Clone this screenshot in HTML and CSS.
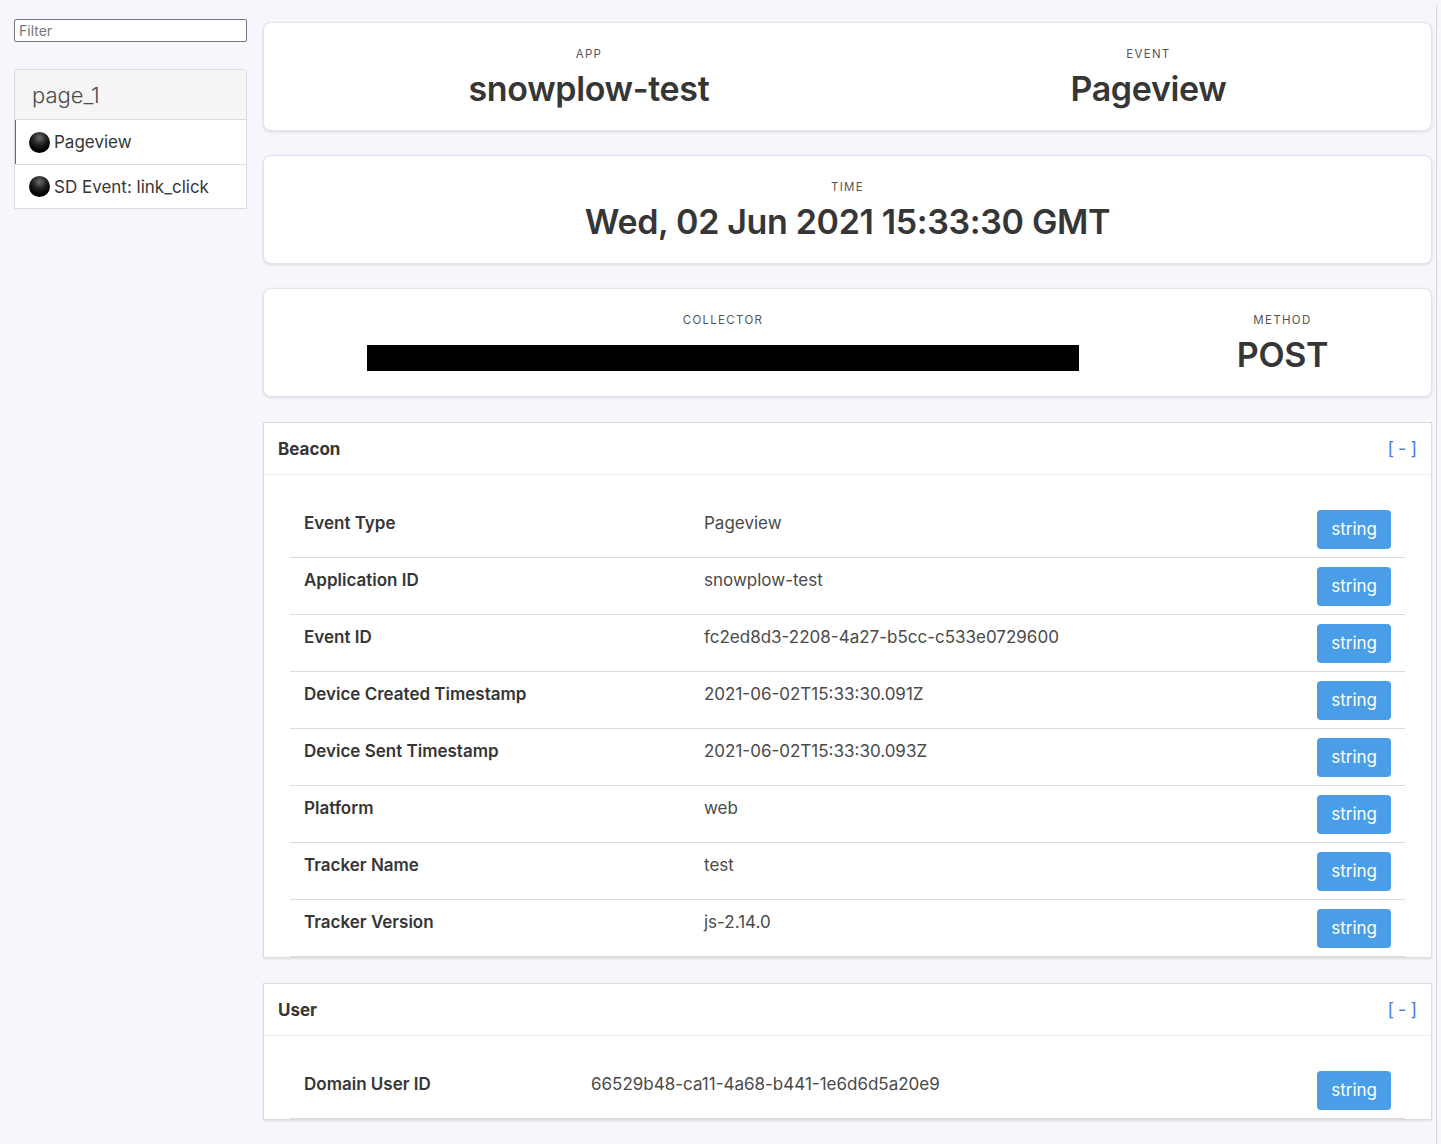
FILE: index.html
```html
<!DOCTYPE html>
<html lang="en">
<head>
<meta charset="utf-8">
<title>Snowplow Inspector</title>
<link rel="stylesheet" href="styles.css">
</head>
<body>
<div class="layout">
  <aside class="sidebar">
    <input class="filter" type="text" placeholder="Filter">
    <div class="pages">
      <div class="page-head">page_1</div>
      <a class="event is-active"><span class="dot"></span>Pageview</a>
      <a class="event"><span class="dot"></span>SD Event: link_click</a>
    </div>
  </aside>
  <main class="main">
    <section class="box level">
      <div class="level-item">
        <p class="heading">App</p>
        <p class="title">snowplow-test</p>
      </div>
      <div class="level-item">
        <p class="heading">Event</p>
        <p class="title">Pageview</p>
      </div>
    </section>
    <section class="box level">
      <div class="level-item">
        <p class="heading">Time</p>
        <p class="title">Wed, 02 Jun 2021 15:33:30 GMT</p>
      </div>
    </section>
    <section class="box level">
      <div class="level-item">
        <p class="heading">Collector</p>
        <p class="title"><span class="redacted"></span></p>
      </div>
      <div class="level-item">
        <p class="heading">Method</p>
        <p class="title">POST</p>
      </div>
    </section>

    <section class="panel">
      <header class="panel-head">
        <span class="panel-title">Beacon</span>
        <a class="toggle">[ - ]</a>
      </header>
      <div class="panel-body">
        <table class="fields beacon">
          <tr><th>Event Type</th><td>Pageview</td><td class="type"><span class="tag">string</span></td></tr>
          <tr><th>Application ID</th><td>snowplow-test</td><td class="type"><span class="tag">string</span></td></tr>
          <tr><th>Event ID</th><td>fc2ed8d3-2208-4a27-b5cc-c533e0729600</td><td class="type"><span class="tag">string</span></td></tr>
          <tr><th>Device Created Timestamp</th><td>2021-06-02T15:33:30.091Z</td><td class="type"><span class="tag">string</span></td></tr>
          <tr><th>Device Sent Timestamp</th><td>2021-06-02T15:33:30.093Z</td><td class="type"><span class="tag">string</span></td></tr>
          <tr><th>Platform</th><td>web</td><td class="type"><span class="tag">string</span></td></tr>
          <tr><th>Tracker Name</th><td>test</td><td class="type"><span class="tag">string</span></td></tr>
          <tr><th>Tracker Version</th><td>js-2.14.0</td><td class="type"><span class="tag">string</span></td></tr>
        </table>
      </div>
    </section>

    <section class="panel">
      <header class="panel-head">
        <span class="panel-title">User</span>
        <a class="toggle">[ - ]</a>
      </header>
      <div class="panel-body">
        <table class="fields user">
          <tr><th>Domain User ID</th><td>66529b48-ca11-4a68-b441-1e6d6d5a20e9</td><td class="type"><span class="tag">string</span></td></tr>
        </table>
      </div>
    </section>
  </main>
</div>
</body>
</html>
```

FILE: styles.css
```css
html, body {
  margin: 0;
  padding: 0;
  background: #f6f7fc;
  color: #363636;
  font-family: Inter, "Noto Sans", "Liberation Sans", sans-serif;
}

.layout {
  display: flex;
  width: 1441px;
  height: 1144px;
  overflow: hidden;
}

.sidebar {
  width: 233px;
  margin: 19px 16px 0 14px;
  flex: 0 0 233px;
}

.filter {
  display: block;
  box-sizing: border-box;
  width: 233px;
  height: 23px;
  margin: 0;
  padding: 1px 4px;
  border: 1px solid #767676;
  border-radius: 2px;
  background: #fff;
  font-family: Inter, "Liberation Sans", sans-serif;
  font-size: 14px;
  color: #333;
}
.filter::placeholder { color: #777; }

.pages {
  margin-top: 27px;
  border: 1px solid #dbdbdb;
  border-radius: 4px 4px 0 0;
  background: #fff;
}

.page-head {
  height: 50px;
  box-sizing: border-box;
  padding: 12px 17px 0;
  background: #f5f5f5;
  border-bottom: 1px solid #dbdbdb;
  font-size: 22px;
  font-weight: 300;
  color: #4a4a4a;
  border-radius: 4px 4px 0 0;
}

.event {
  display: flex;
  align-items: center;
  height: 44px;
  box-sizing: border-box;
  padding-left: 13px;
  font-size: 17px;
  color: #363636;
  border-left: 1px solid transparent;
}
.event + .event { border-top: 1px solid #dbdbdb; }
.event.is-active { border-left: 1px solid #3273dc; }

.dot {
  width: 21px;
  height: 21px;
  border-radius: 50%;
  margin-right: 4px;
  background: radial-gradient(circle at 50% 28%, #6b6b6b 0%, #222 38%, #000 70%);
  flex: 0 0 21px;
}

.main {
  flex: 0 0 1174px;
  box-sizing: border-box;
  margin-top: 5px;
  padding: 17px 4px 0 0;
  border-right: 1px solid #d6d6d6;
  min-width: 0;
}

.box {
  background: #fff;
  border: 1px solid #e2e3e8;
  border-radius: 8px;
  box-shadow: 0 1px 3px rgba(10, 10, 10, 0.12);
  margin-bottom: 24px;
}

.level {
  display: flex;
  padding: 22px 24px 22px;
}

.level-item {
  flex: 1 1 auto;
  text-align: center;
}

.heading {
  margin: 0 0 7px;
  font-size: 11.5px;
  line-height: 18px;
  letter-spacing: 1.3px;
  text-transform: uppercase;
  color: #555;
}

.title {
  margin: 0;
  font-size: 34px;
  line-height: 38px;
  font-weight: 600;
  color: #363636;
  letter-spacing: -0.35px;
}

.redacted {
  display: inline-block;
  width: 712px;
  height: 26px;
  background: #000;
  vertical-align: -4px;
}

.panel {
  background: #fff;
  border: 1px solid #dbdcdf;
  box-shadow: 0 1px 2px rgba(10, 10, 10, 0.1);
  margin: 25px 0 25px;
}
.panel + .panel { margin-top: 25px; }

.panel-head {
  display: flex;
  justify-content: space-between;
  align-items: center;
  height: 52px;
  box-sizing: border-box;
  padding: 0 14px 0 14px;
  border-bottom: 1px solid #ededed;
}

.panel-title {
  font-size: 17px;
  font-weight: 700;
  color: #363636;
}

.toggle {
  font-size: 18px;
  color: #4a7ad9;
  word-spacing: -1px;
}

.panel-body {
  padding: 26px 26px 0;
}

.fields {
  width: 100%;
  border-collapse: collapse;
  font-size: 17px;
}

.fields th,
.fields td {
  padding: 9px 14px 8px 14px;
  vertical-align: top;
  text-align: left;
  line-height: 26px;
  border-bottom: 1px solid #dbdbdb;
}

.fields th {
  font-weight: 600;
  color: #363636;
}

.fields td {
  color: #4a4a4a;
  font-weight: 400;
}

.beacon th { width: 372px; }
.user th { width: 259px; }

.fields td.type {
  text-align: right;
  width: 80px;
}

.tag {
  display: inline-block;
  height: 39px;
  box-sizing: border-box;
  padding: 0 14px;
  line-height: 39px;
  border-radius: 4px;
  background: #4a9ee7;
  color: #fff;
  font-size: 17px;
  vertical-align: top;
}
```
